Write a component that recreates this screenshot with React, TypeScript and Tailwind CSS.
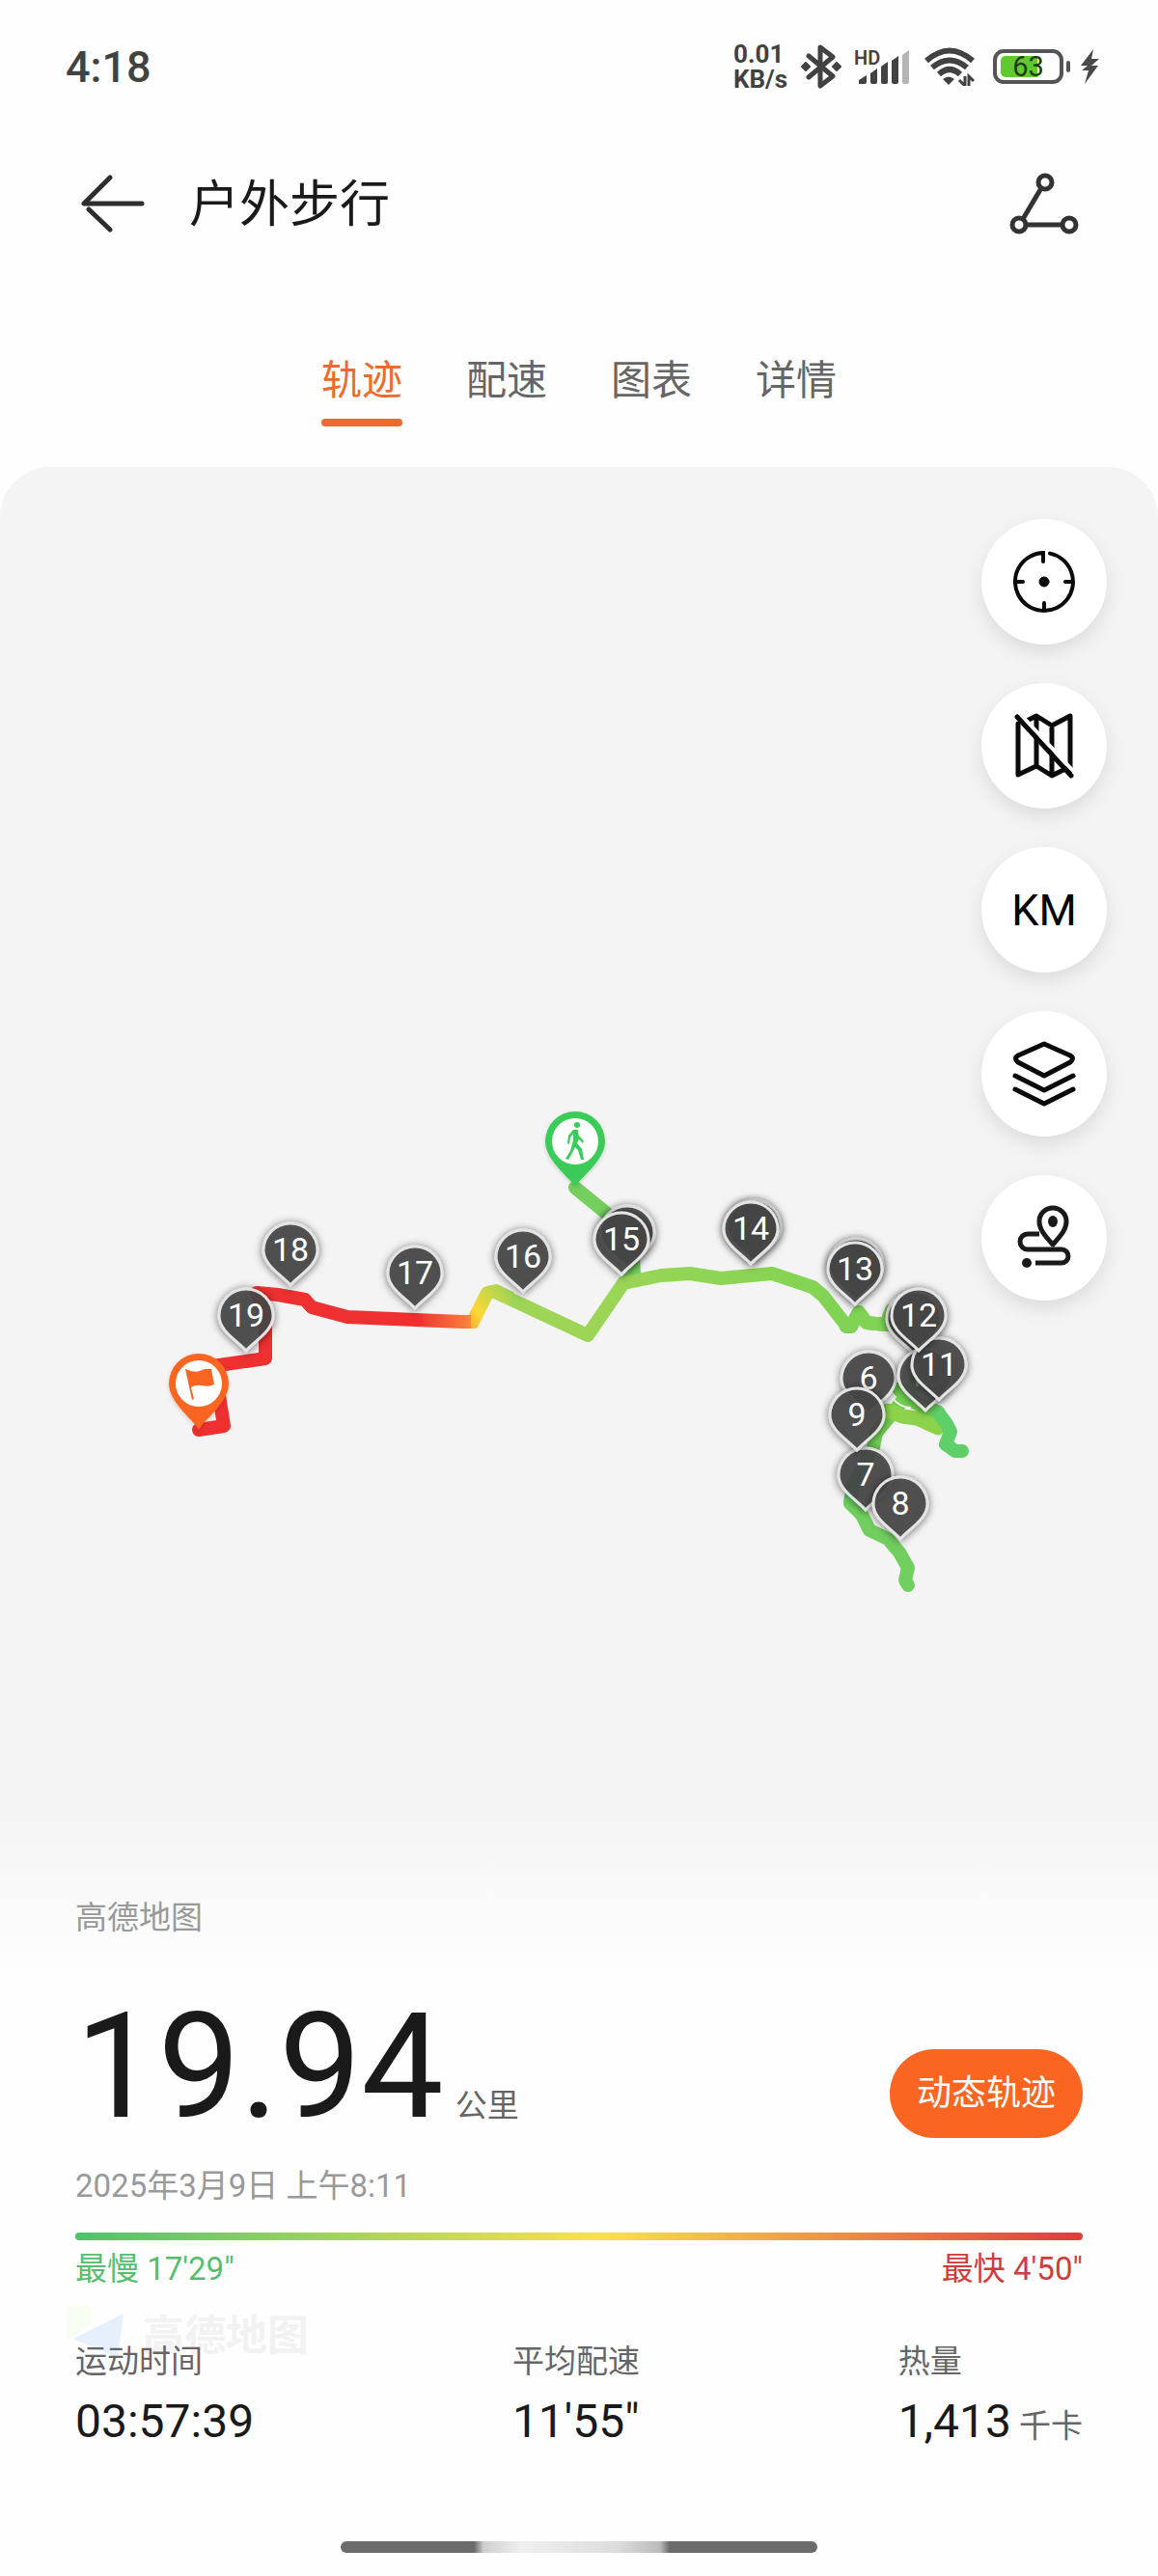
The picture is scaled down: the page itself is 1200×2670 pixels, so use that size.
import { useState } from "react";

const tabs = ["轨迹", "配速", "图表", "详情"];

// x / y is where the tip of the pin stands on the map.
// the first kilometres lie fully under the way back, so they have no label
const pins = [
  { id: 1, km: "", x: 650, y: 1315 },
  { id: 2, km: "", x: 781, y: 1309 },
  { id: 3, km: "", x: 887, y: 1349 },
  { id: 4, km: "", x: 947, y: 1404 },
  { id: 6, km: "6", x: 900, y: 1466 },
  { id: 7, km: "7", x: 897, y: 1566 },
  { id: 8, km: "8", x: 933, y: 1596 },
  { id: 9, km: "9", x: 888, y: 1504 },
  { id: 10, km: "10", x: 959, y: 1463 },
  { id: 11, km: "11", x: 973, y: 1452 },
  { id: 12, km: "12", x: 952, y: 1401 },
  { id: 13, km: "13", x: 886, y: 1353 },
  { id: 14, km: "14", x: 778, y: 1311 },
  { id: 15, km: "15", x: 644, y: 1322 },
  { id: 16, km: "16", x: 542, y: 1340 },
  { id: 17, km: "17", x: 430, y: 1357 },
  { id: 18, km: "18", x: 301, y: 1333 },
  { id: 19, km: "19", x: 255, y: 1401 },
];

const StatusBar = () => (
  <div className="flex h-[138px] items-center justify-between pl-[68px] pr-[60px] text-[#424242]">
    <span className="text-[45px] font-medium leading-none">4:18</span>
    <div className="flex items-center">
      <div className="w-[70px] text-[26px] font-bold leading-[26px]">
        <div>0.01</div>
        <div>KB/s</div>
      </div>
      <svg className="h-[46px] w-[42px]" viewBox="0 0 42 46" fill="none">
        <path
          d="M8 12 L33 33 L20 43 V3 L33 13 L8 34"
          stroke="#424242"
          strokeWidth="5"
          strokeLinejoin="round"
          strokeLinecap="round"
        />
        <path d="M1 23 l4 -4 4 4 -4 4z M33 23 l4 -4 4 4 -4 4z" fill="#424242" stroke="#424242" strokeWidth="2" strokeLinejoin="round" />
      </svg>
      <div className="relative ml-[13px] h-[38px] w-[58px]">
        <span className="absolute left-0 top-0 text-[20px] font-semibold leading-none">HD</span>
        <svg className="h-[38px] w-[58px]" viewBox="0 0 58 38">
          <path d="M5 37 V33 L13 28 V35 Q13 37 11 37z" fill="#424242" />
          <path d="M17 26 L24 21 V35 Q24 37 22 37 H19 Q17 37 17 35z" fill="#424242" />
          <path d="M28 19 L35 14 V35 Q35 37 33 37 H30 Q28 37 28 35z" fill="#424242" />
          <path d="M39 13 L46 8 V35 Q46 37 44 37 H41 Q39 37 39 35z" fill="#424242" />
          <path d="M50 7 L57 2 V35 Q57 37 55 37 H52 Q50 37 50 35z" fill="#b4b4b4" />
        </svg>
      </div>
      <svg className="ml-[14px] h-[40px] w-[54px]" viewBox="0 0 54 40" fill="none">
        <path d="M3 14 Q27 -7 51 14" stroke="#424242" strokeWidth="6" />
        <path d="M9 21 Q27 6 45 21" stroke="#424242" strokeWidth="6" />
        <path d="M16 28 Q27 18 38 28" stroke="#424242" strokeWidth="6" />
        <path d="M26 39 L20 33 Q26 28 32 33z" fill="#424242" />
        <path d="M43 30 V40 L37 34 M47 40 V30 L52 35" stroke="#424242" strokeWidth="3" />
      </svg>
      <div className="relative ml-[18px] flex h-[36px] w-[73px] items-center justify-center rounded-[11px] border-[4px] border-[#555]">
        <div className="absolute inset-y-[3px] left-[4px] w-[38px] rounded-l-[5px] bg-[#5fc930]" />
        <span className="relative text-[29px] leading-none text-[#1f3a14]">63</span>
      </div>
      <div className="ml-[3px] h-[12px] w-[4px] rounded-full bg-[#555]" />
      <svg className="ml-[9px] h-[38px] w-[22px]" viewBox="0 0 22 38">
        <path d="M15 1 L2 18 H9 L3 23 H10 L6 37 L20 18 H13 L21 11 H13z" fill="#4a4a4a" />
      </svg>
    </div>
  </div>
);

const Header = () => (
  <header className="flex h-[146px] items-center justify-between pl-[84px] pr-[80px]">
    <div className="flex items-center">
      <button aria-label="返回">
        <svg className="h-[60px] w-[66px]" viewBox="0 0 66 60" fill="none" stroke="#2e2e2e" strokeWidth="5" strokeLinecap="round">
          <path d="M30 3 L3 30 H63 M8 36 L30 57" strokeLinejoin="round" />
        </svg>
      </button>
      <h1 className="ml-[46px] pt-1 text-[52px] leading-[72px] text-[#1a1a1a]">户外步行</h1>
    </div>
    <button aria-label="分享">
      <svg className="h-[64px] w-[74px]" viewBox="0 0 74 64" fill="none" stroke="#333" strokeWidth="5">
        <circle cx="37" cy="10" r="7" />
        <circle cx="10" cy="54" r="7" />
        <circle cx="62" cy="54" r="7" />
        <path d="M33 16 L14 48 M17 54 H55" />
      </svg>
    </button>
  </header>
);

const toolClass =
  "flex size-[130px] items-center justify-center rounded-full bg-white shadow-[0_8px_20px_rgba(0,0,0,0.10)]";

const MapTools = () => (
  <div className="absolute right-[53px] top-[54px] flex flex-col gap-10">
    <button className={toolClass} aria-label="定位">
      <svg className="size-[64px]" viewBox="0 0 64 64" fill="none" stroke="#0a0a0a" strokeWidth="4" strokeLinecap="round">
        <path d="M38 2.6 A30 30 0 1 1 31 2 V11" />
        <path d="M3 32 H10 M54 32 H61 M32 61 V54" />
        <circle cx="32" cy="32" r="5" fill="#0a0a0a" strokeWidth="1" />
      </svg>
    </button>
    <button className={toolClass} aria-label="隐藏地图">
      <svg className="h-[68px] w-[64px]" viewBox="0 0 64 68" fill="none" stroke="#0a0a0a" strokeWidth="5" strokeLinecap="round" strokeLinejoin="round">
        <path d="M5 11 V64 L24 55 L40 65 L58 56 M16 7 L24 3 L40 13 L59 3 V60 M24 4 V55 M40 13 V64" />
        <path d="M7 1 L63 61" stroke="#fff" strokeWidth="4" />
        <path d="M4 4 L60 65" />
      </svg>
    </button>
    <button className={toolClass} aria-label="公里标记">
      <span className="text-[45px] leading-none text-black">KM</span>
    </button>
    <button className={toolClass} aria-label="图层">
      <svg className="size-[68px]" viewBox="0 0 68 68" fill="none" stroke="#0a0a0a" strokeWidth="5" strokeLinecap="round" strokeLinejoin="round">
        <path d="M34 3 L61 15 Q66 18 61 22 L34 36 L7 22 Q2 18 7 15z" />
        <path d="M4 36 L34 51 L64 36 M4 50 L34 65 L64 50" />
      </svg>
    </button>
    <button className={toolClass} aria-label="路线">
      <svg className="size-[68px]" viewBox="0 0 68 68" fill="none" stroke="#1a1a1a" strokeWidth="5">
        <path d="M43 41 C34 31 29 25 29 17 A14 14 0 0 1 57 17 C57 25 52 31 43 41z" strokeLinejoin="round" />
        <ellipse cx="43" cy="17" rx="5" ry="6" fill="#1a1a1a" stroke="none" />
        <path d="M29 30 H17 A8 8 0 0 0 17 46 H52 A7 7 0 0 1 52 60 H25" />
        <circle cx="16" cy="60" r="5" fill="#1a1a1a" stroke="none" />
      </svg>
    </button>
  </div>
);

const RouteMap = () => (
  <svg className="block w-full" viewBox="0 484 1200 1386" fill="none">
    <defs>
      <filter id="pinShadow" x="-30%" y="-30%" width="160%" height="160%">
        <feDropShadow dx="0" dy="1" stdDeviation="4" floodColor="#000" floodOpacity="0.6" />
      </filter>
      <filter id="softShadow" x="-30%" y="-30%" width="160%" height="160%">
        <feDropShadow dx="0" dy="2" stdDeviation="2" floodColor="#000" floodOpacity="0.15" />
      </filter>
      <linearGradient id="toOrange" gradientUnits="userSpaceOnUse" x1="431" y1="0" x2="492" y2="0">
        <stop offset="0" stopColor="#ee3030" />
        <stop offset="1" stopColor="#f98a3c" />
      </linearGradient>
      <linearGradient id="toYellow" gradientUnits="userSpaceOnUse" x1="484" y1="1375" x2="530" y2="1338">
        <stop offset="0" stopColor="#fba638" />
        <stop offset="0.3" stopColor="#fdd836" />
        <stop offset="1" stopColor="#9dd556" />
      </linearGradient>
      <linearGradient id="toGreen" gradientUnits="userSpaceOnUse" x1="609" y1="0" x2="880" y2="0">
        <stop offset="0" stopColor="#9dd556" />
        <stop offset="1" stopColor="#80d354" />
      </linearGradient>
    </defs>

    <g strokeWidth="14" strokeLinecap="round" strokeLinejoin="round">
      <path d="M596 1231 L634 1262 L656 1300 L657 1322 L646 1330" stroke="#75cf5e" />
      <path d="M877 1375 H882 L890 1360 L898 1371 L918 1373 L924 1358 L945 1375 L955 1415 L945 1440 L908 1485 L905 1500" stroke="#72ce55" />
      <path d="M513 1339 L609 1384 L646 1330 L685 1322 L715 1320 L747 1325 L800 1320 L842 1334 L853 1343 L877 1374 L882 1374 L890 1360 L898 1371 L918 1373 L924 1358" stroke="url(#toGreen)" />
      <path d="M479 1370 H490 L505 1340 L514 1338 L530 1346" stroke="url(#toYellow)" strokeLinecap="butt" />
      <path d="M430 1368 L479 1370 L488 1370" stroke="url(#toOrange)" strokeLinecap="butt" />
      <path d="M431 1368 L360 1365 L323 1355 L316 1347 L288 1342 L266 1340 L275 1360 V1408 L220 1416 L226 1440 L232 1478 L206 1482" stroke="#ee3030" />
      <path d="M920 1462 L935 1468 L950 1470 L972 1480" stroke="#8cd34b" strokeWidth="15" />
      <path d="M932 1440 L945 1452 L972 1464" stroke="#70d04f" strokeWidth="15" />
      <path d="M972 1464 L981 1476 L985 1484 L980 1497 L990 1504 L997 1504" stroke="#5fcf68" />
      <path d="M900 1510 L884 1540 L881 1558" stroke="#55cf74" />
      <path d="M881 1558 L893 1570 L901 1586 L920 1595 L932 1609 L941 1625 L938 1638 L941 1643" stroke="#70cf5e" />
    </g>
    <path d="M924 1448 q8 11 20 11" stroke="#f4f4f4" strokeWidth="2" />

    {pins.map((pin) => (
      <g key={pin.id} transform={`translate(${pin.x} ${pin.y})`}>
        <path
          d="M0 -1 C-10 -12 -28 -22 -28 -37 A28 28 0 0 1 28 -37 C28 -22 10 -12 0 -1z"
          fill="#484848"
          fillOpacity="0.88"
          stroke="#e4e4e4"
          strokeWidth="3"
          filter="url(#pinShadow)"
        />
        {pin.km && (
          <text y="-26" textAnchor="middle" fontSize="34" fill={pin.id === 10 ? "#777" : "#fff"}>
            {pin.km}
          </text>
        )}
      </g>
    ))}

    <g transform="translate(596 1183)" filter="url(#softShadow)">
      <path d="M0 47 C-5 38 -31 20 -31 0 A31 31 0 0 1 31 0 C31 20 5 38 0 47z" fill="#3bcb59" />
      <circle r="24" fill="#fff" />
      <circle cx="2" cy="-17" r="3" fill="#3bcb59" />
      <path d="M-2 -12 L3 -12 L4 -3 L2 2 L7 8 L9 19 L6 19 L3 9 L0 6 L-3 12 L-7 19 L-10 18 L-5 10 L-2 -1 L-2 -8 L-5 -4 L-6 3 L-8 2 L-7 -6z M4 -6 L9 0 L8 2 L3 -3z" fill="#3bcb59" />
    </g>
    <g transform="translate(206 1434)" filter="url(#softShadow)">
      <path d="M0 48 C-5 38 -31 20 -31 0 A31 31 0 0 1 31 0 C31 20 5 38 0 48z" fill="#fb6522" />
      <circle r="24" fill="#fff" />
      <path d="M-14 -15 L-11 -14 Q-5 -11 1 -13 Q7 -16 13 -15 L16 1 Q10 4 3 2 Q-4 1 -8 4 L-5 16 L-7 17z" fill="#fb6522" />
    </g>
  </svg>
);

const App = () => {
  const [active, setActive] = useState("轨迹");

  return (
    <div className="flex min-h-screen flex-col bg-[#fefefe] font-[Roboto,'Noto_Sans_CJK_SC',sans-serif]">
      <StatusBar />
      <Header />
      <nav className="flex h-[200px] justify-center gap-[66px] pt-[81px]">
        {tabs.map((tab) => (
          <button
            key={tab}
            onClick={() => setActive(tab)}
            className={`flex flex-col items-center text-[42px] leading-[60px] ${
              tab === active ? "text-[#ef6a2e]" : "text-[#666]"
            }`}
          >
            {tab}
            {tab === active && <span className="mt-[9px] h-2 w-full rounded-full bg-[#ef6a2e]" />}
          </button>
        ))}
      </nav>

      <section className="relative overflow-hidden rounded-t-[52px] bg-[#f4f4f4]">
        <RouteMap />
        <MapTools />
      </section>

      <section className="flex grow flex-col bg-[linear-gradient(#f4f4f4,#fefefe_180px)] px-[78px] pb-6 text-[33px] leading-[48px]">
        <p className="mt-[94px] text-[#999]">高德地图</p>
        <div className="mt-[50px] flex items-end justify-between">
          <p className="flex items-baseline gap-3 text-[#666]">
            <span className="text-[152px] leading-[160px] text-[#1a1a1a]">19.94</span>
            <span>公里</span>
          </p>
          <button className="mb-[6px] h-[92px] w-[200px] rounded-full bg-[#fb6522] text-[36px] text-white">
            动态轨迹
          </button>
        </div>
        <p className="mt-5 text-[#999]">2025年3月9日 上午8:11</p>
        <div className="mt-6 h-2 rounded-full bg-[linear-gradient(to_right,#4bc46c,#fbe14b_52%,#e03c3c)]" />
        <div className="mt-[6px] flex justify-between">
          <span className="text-[#55be6e]">最慢 17'29"</span>
          <span className="text-[#d03c3c]">最快 4'50"</span>
        </div>
        <div className="relative mt-12 flex justify-between">
          <div className="absolute -left-2 -top-9 flex items-center">
            <svg className="h-[58px] w-[62px]" viewBox="0 0 62 58">
              <path d="M0 2 H24 V20 L0 38z" fill="#f8fdf2" />
              <path d="M6 36 L58 10 L52 56z" fill="#e6effc" />
            </svg>
            <span className="ml-4 pt-2 text-[43px] font-bold text-[#f2f2f2]">高德地图</span>
          </div>
          <div className="relative">
            <p className="text-[#666]">运动时间</p>
            <p className="mt-[10px] text-[48px] leading-[56px] text-[#1a1a1a]">03:57:39</p>
          </div>
          <div className="relative">
            <p className="text-[#666]">平均配速</p>
            <p className="mt-[10px] text-[48px] leading-[56px] text-[#1a1a1a]">11'55"</p>
          </div>
          <div className="relative">
            <p className="text-[#666]">热量</p>
            <p className="mt-[10px] text-[48px] leading-[56px] text-[#1a1a1a]">
              1,413<span className="ml-2 text-[33px] text-[#666]">千卡</span>
            </p>
          </div>
        </div>
        <div className="mx-auto mt-auto h-3 w-[494px] rounded-full bg-[linear-gradient(to_right,#6b6b6b_28%,#cfcfcf_30%,#f0f0f0_38%,#dcdcdc_58%,#bbb_67%,#6b6b6b_69%)]" />
      </section>
    </div>
  );
};

export default App;
